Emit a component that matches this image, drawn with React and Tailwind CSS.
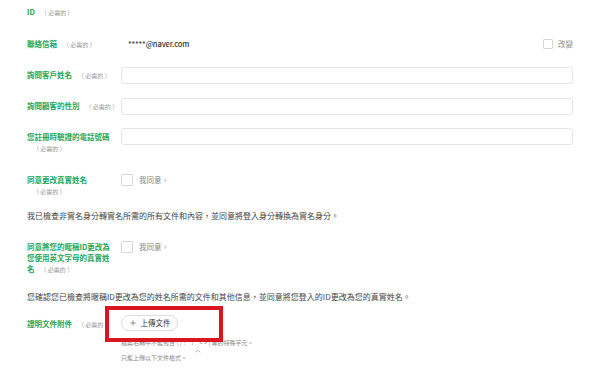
import { Plus, ChevronUp } from "lucide-react"

const font = { fontFamily: '"Noto Sans CJK TC", "Noto Sans", sans-serif' }

function Req({ className = "" }) {
  return <span className={"font-normal text-[6px] text-[#9a9a9a] ml-[6px] " + className}>（ 必需的 ）</span>
}

function Label({ children, className = "" }) {
  return (
    <div className={"w-[94px] shrink-0 text-[7.5px] leading-[11px] font-bold text-[#1ea85c] " + className}>
      {children}
    </div>
  )
}

function Input() {
  return <div className="flex-1 h-[17px] rounded-[3px] border border-[#e6e6e6] bg-white" />
}

function Agree() {
  return (
    <div className="flex items-center gap-[6px]">
      <div className="w-[12px] h-[12px] border border-[#d8d8d8] rounded-[1px] bg-white" />
      <span className="text-[7.5px] text-[#888]">我同意。</span>
    </div>
  )
}

export default function App() {
  return (
    <div className="w-[600px] h-[371px] bg-white overflow-hidden pl-[27px] pr-[27px] flex flex-col" style={font}>
      <div className="h-[24px] flex items-center">
        <span className="text-[7.5px] font-bold text-[#1ea85c]">ID</span>
        <Req />
      </div>

      <div className="mt-[10px] h-[20px] flex items-center">
        <Label>
          聯絡信箱<Req />
        </Label>
        <span className="pl-[7px] text-[7.5px] tracking-[-0.1px] text-[#333] font-medium">*****@naver.com</span>
        <div className="ml-auto flex items-center gap-[5px]">
          <div className="w-[10px] h-[10px] border border-[#d8d8d8] rounded-[1px]" />
          <span className="text-[7.5px] text-[#888]">改變</span>
        </div>
      </div>

      <div className="mt-[12px] h-[18px] flex items-center">
        <Label>
          詢問客戶姓名<Req />
        </Label>
        <Input />
      </div>

      <div className="mt-[13px] h-[18px] flex items-center">
        <Label>
          詢問顧客的性別<Req />
        </Label>
        <Input />
      </div>

      <div className="mt-[13px] flex items-start">
        <Label className="pt-[3px]">
          您註冊時驗證的電話號碼
          <br />
          <Req className="ml-0" />
        </Label>
        <Input />
      </div>

      <div className="mt-[20px] flex items-start">
        <Label className="leading-[10.5px]">
          同意更改真實姓名
          <br />
          <Req className="ml-0" />
        </Label>
        <Agree />
      </div>

      <p className="mt-[13px] text-[8px] leading-[11px] text-[#444]">
        我已檢查非實名身分轉實名所需的所有文件和內容，並同意將登入身分轉換為實名身分。
      </p>

      <div className="mt-[20px] flex items-start">
        <Label>
          同意將您的暱稱ID更改為
          <br />
          您使用英文字母的真實姓
          <br />
          名<Req />
        </Label>
        <Agree />
      </div>

      <p className="mt-[16px] text-[8px] leading-[11px] text-[#444]">
        您確認您已檢查將暱稱ID更改為您的姓名所需的文件和其他信息，並同意將您登入的ID更改為您的真實姓名。
      </p>

      <div className="mt-[13px] flex items-start">
        <Label className="pt-[2.5px]">
          證明文件附件<Req />
        </Label>
        <div className="flex flex-col">
          <div className="relative">
            <button className="h-[16px] w-[57px] rounded-full border border-[#dcdcdc] bg-white flex items-center justify-center gap-[4px] text-[7.5px] text-[#333]">
              <Plus className="w-[8px] h-[8px]" strokeWidth={1.5} />
              上傳文件
            </button>
            <div className="absolute left-[-16px] top-[-9px] w-[118px] h-[36px] border-[4px] border-[#da1620]" />
          </div>
          <p className="mt-[8px] text-[6px] leading-[8px] text-[#888] whitespace-nowrap">
            檔案名稱中不能包含 \ / : * ? " &lt; &gt; | 等的特殊字元。
          </p>
          <div className="mt-[7px] flex items-start">
            <p className="text-[6px] leading-[8px] text-[#888] whitespace-nowrap">只能上傳以下文件格式。</p>
            <ChevronUp className="w-[8px] h-[8px] ml-[7px] -mt-[7px] text-[#777]" strokeWidth={1.5} />
          </div>
        </div>
      </div>
    </div>
  )
}
